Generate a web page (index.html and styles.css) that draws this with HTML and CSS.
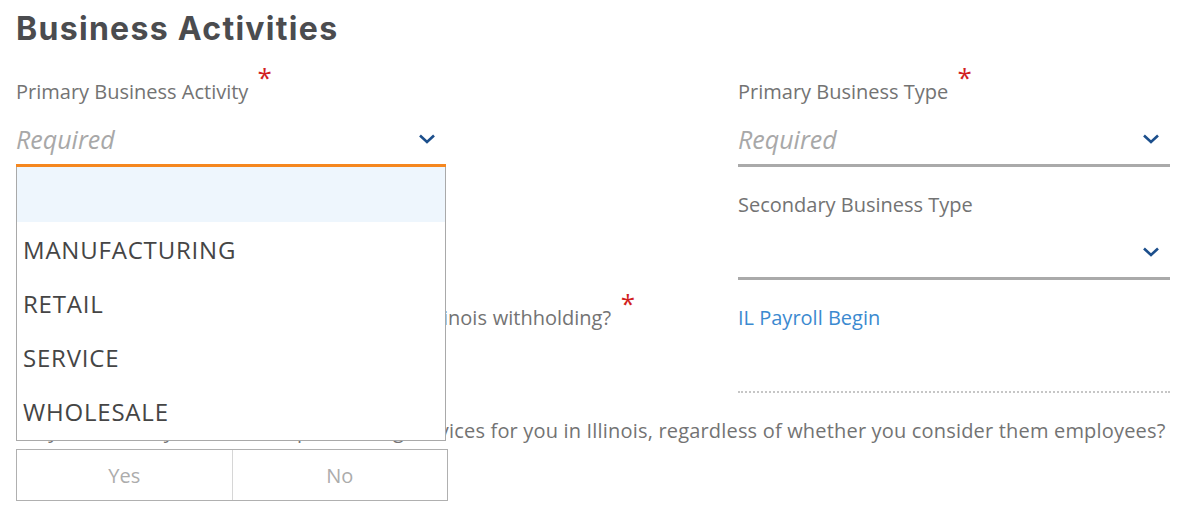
FILE: index.html
```html
<!DOCTYPE html>
<html lang="en">
<head>
    <meta charset="UTF-8">
    <meta name="viewport" content="width=device-width, initial-scale=1.0">
    <title>Business Activities</title>
    <link rel="stylesheet" href="styles.css">
</head>
<body>

<h1 class="title">Business Activities</h1>

<div class="form-grid">
    <!-- Ряд 1 -->
    <div class="field field-narrow">
        <label class="label">Primary Business Activity <span class="req">*</span></label>
        <div class="select is-open">
            <span class="placeholder">Required</span>
            <svg class="chevron" viewBox="0 0 18 10" width="18" height="10"><path d="M2 1.5 L9 8 L16 1.5" /></svg>

            <!-- Открытый список -->
            <ul class="options">
                <li class="option is-active">&nbsp;</li>
                <li class="option">MANUFACTURING</li>
                <li class="option">RETAIL</li>
                <li class="option">SERVICE</li>
                <li class="option">WHOLESALE</li>
            </ul>
        </div>
    </div>
    <div class="field">
        <label class="label">Primary Business Type <span class="req">*</span></label>
        <div class="select">
            <span class="placeholder">Required</span>
            <svg class="chevron" viewBox="0 0 18 10" width="18" height="10"><path d="M2 1.5 L9 8 L16 1.5" /></svg>
        </div>
    </div>

    <!-- Ряд 2 -->
    <div class="field"></div>
    <div class="field">
        <label class="label">Secondary Business Type</label>
        <div class="select">
            <span class="placeholder"></span>
            <svg class="chevron" viewBox="0 0 18 10" width="18" height="10"><path d="M2 1.5 L9 8 L16 1.5" /></svg>
        </div>
    </div>

    <!-- Ряд 3 -->
    <div class="field">
        <label class="label label-question">Do you have workers with wages subject to Illinois withholding? <span class="req">*</span></label>
    </div>
    <div class="field">
        <label class="label label-link">IL Payroll Begin</label>
        <div class="date-input"></div>
    </div>
</div>

<p class="question">Do you currently have others performing services for you in Illinois, regardless of whether you consider them employees?</p>

<div class="yes-no">
    <button type="button" class="yes-no-btn">Yes</button>
    <button type="button" class="yes-no-btn">No</button>
</div>

</body>
</html>
```

FILE: styles.css
```css
body {
    font-family: 'Open Sans', 'Noto Sans', sans-serif;
    background-color: #fff;
    color: #737373;
    margin: 0;
    padding: 9px 16px 0;
}

.title {
    font-family: 'Inter', sans-serif;
    font-size: 32px;
    line-height: 40px;
    font-weight: 700;
    letter-spacing: 1.3px;
    color: #4b4c4f;
    margin: 0;
}

.form-grid {
    display: grid;
    grid-template-columns: 706px 1fr;
    column-gap: 16px;
    row-gap: 24px;
    margin-top: 29px;
}

.field {
    min-height: 89px;
}

.field-narrow {
    width: 430px;
}

.label {
    display: block;
    font-size: 20px;
    line-height: 28px;
    color: #737373;
    white-space: nowrap;
}

.label-question {
    word-spacing: 0.6px;
}

.label-link {
    color: #3b8ad0;
}

/* Звёздочка не должна раздвигать строку */
.req {
    color: #d21f1f;
    font-size: 26px;
    line-height: 0;
    position: relative;
    top: -12px;
    margin-left: 4px;
}

.select {
    position: relative;
    height: 61px;
    box-sizing: border-box;
    padding: 8px 10px 0 0;
    border-bottom: 3px solid #aaaaaa;
    display: flex;
    align-items: center;
    justify-content: space-between;
}

.select.is-open {
    border-bottom-color: #f5871f;
}

.placeholder {
    font-size: 25px;
    font-style: italic;
    color: #a8a8a8;
}

.chevron {
    fill: none;
    stroke: #1c4f8c;
    stroke-width: 2.6;
}

/* Выпадающий список поверх остальной формы */
.options {
    position: absolute;
    top: calc(100% + 3px);
    left: 0;
    right: 0;
    margin: 0;
    padding: 0 0 2px;
    list-style: none;
    background-color: #fff;
    border: 1px solid #a9a9a9;
    border-top: none;
    z-index: 10;
}

.option {
    height: 54px;
    line-height: 56px;
    padding-left: 6px;
    font-size: 24px;
    letter-spacing: 0.8px;
    color: #454545;
}

.option.is-active {
    height: 55px;
    background-color: #eef6fd;
}

.date-input {
    height: 61px;
    border-bottom: 2px dotted #c6c6c6;
    box-sizing: border-box;
}

.question {
    margin: 24px 0 0;
    font-size: 20px;
    line-height: 28px;
    letter-spacing: 0.18px;
    white-space: nowrap;
}

.yes-no {
    display: flex;
    width: 430px;
    margin-top: 4px;
    border: 1px solid #b0b0b0;
}

.yes-no-btn {
    flex: 1;
    height: 50px;
    font-family: inherit;
    font-size: 20px;
    color: #acacac;
    background: #fff;
    border: none;
    padding: 0;
}

.yes-no-btn + .yes-no-btn {
    border-left: 1px solid #d6d6d6;
}
```
